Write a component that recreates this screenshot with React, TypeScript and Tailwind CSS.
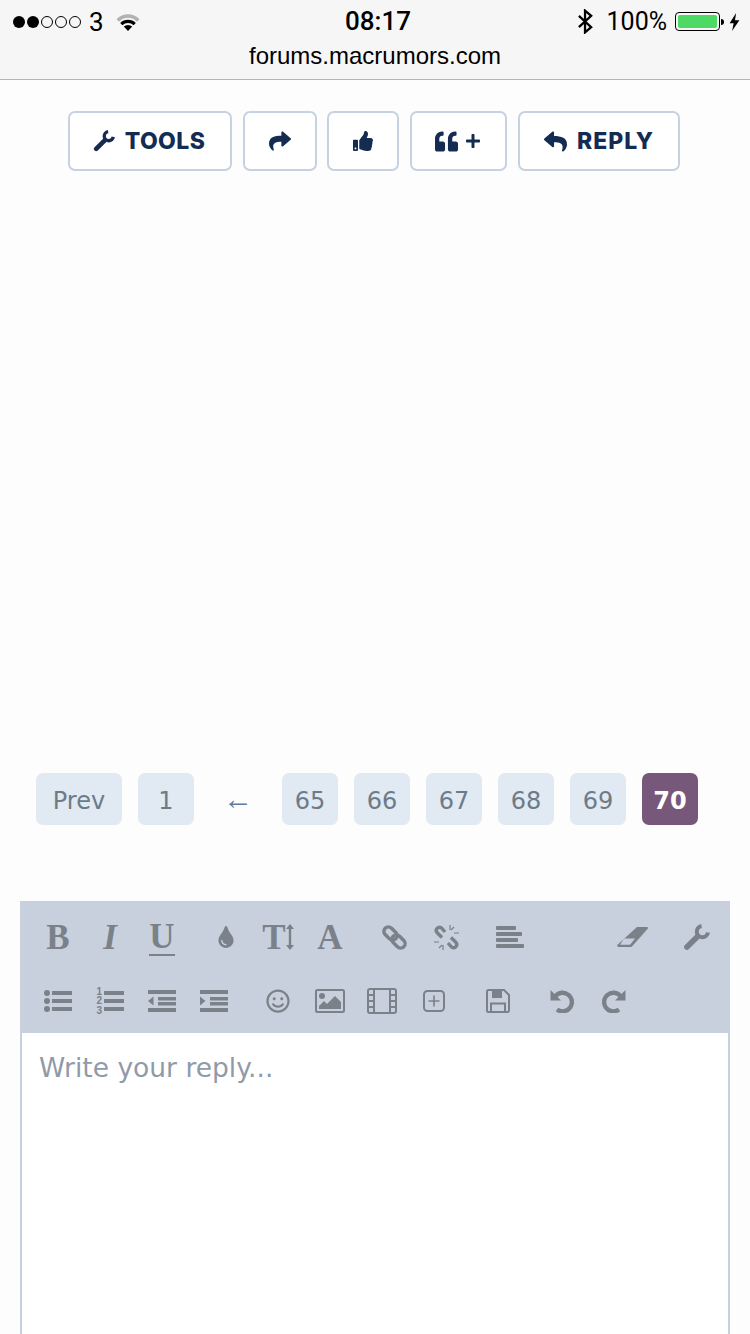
import React from "react";
import { FaShare, FaThumbsUp, FaQuoteLeft, FaPlus, FaReply, FaTint, FaRegSmile } from "react-icons/fa";

const GRAY = "#7b8189";

const StatusBar = () => (
  <div className="h-20 bg-[#f6f6f6] border-b border-[#b4b4b4] font-['Roboto',sans-serif] text-black">
    <div className="relative flex h-[43px] items-center justify-between pl-[13px] pr-[10px]">
      <div className="flex items-center">
        <div className="flex gap-[2px]">
          <span className="h-[12px] w-[12px] rounded-full bg-black" />
          <span className="h-[12px] w-[12px] rounded-full bg-black" />
          <span className="h-[12px] w-[12px] rounded-full border border-black" />
          <span className="h-[12px] w-[12px] rounded-full border border-black" />
          <span className="h-[12px] w-[12px] rounded-full border border-black" />
        </div>
        <span className="ml-[8px] text-[26px] leading-none">3</span>
        <svg className="ml-[12px]" width="24" height="18" viewBox="0 0 24 18">
          <path d="M0.5 6.2a16 16 0 0 1 23 0l-2.400 2.500a12.600 12.600 0 0 0-18.200 0z" fill="#b2b2b2" />
          <path d="M4.200 10a11 11 0 0 1 15.600 0l-2.200 2.300a8 8 0 0 0-11.200 0z" fill="#000" />
          <path d="M7.800 13.600a6 6 0 0 1 8.400 0L12 18z" fill="#000" />
        </svg>
      </div>
      <span className="absolute left-[345px] top-[6px] text-[26px] font-medium leading-[30px]">08:17</span>
      <div className="flex items-center">
        <svg width="17" height="25" viewBox="0 0 18 26" fill="none" stroke="#000" strokeWidth="2.400">
          <path d="M2 7l13 12-6.500 5.500V1.500L15 7 2 19" />
        </svg>
        <span className="ml-[13px] text-[25px] leading-none">100%</span>
        <div className="ml-[8px] flex h-[19px] w-[45px] rounded-[4px] border border-black p-[2px]">
          <div className="h-full w-full rounded-[2px] bg-[#4cd964]" />
        </div>
        <div className="ml-[1px] h-[6px] w-[3px] rounded-r-full bg-black" />
        <svg className="ml-[5px]" width="11" height="18" viewBox="0 0 12 22">
          <path d="M8 0L0 12.500h5L3 22l9-13H6.600z" fill="#000" />
        </svg>
      </div>
    </div>
    <div className="text-center font-['Liberation_Sans',sans-serif] text-[24px] leading-[26px]">forums.macrumors.com</div>
  </div>
);

const ActionButton = ({ className, children }: { className: string; children: React.ReactNode }) => (
  <button
    className={`flex h-[60px] items-center justify-center rounded-[7px] border-2 border-[#c7d2e0] bg-white font-['Inter',sans-serif] text-[23px] font-extrabold text-[#152c52] ${className}`}
  >
    {children}
  </button>
);

const PageBtn = ({ label, className = "w-14", active }: { label: string; className?: string; active?: boolean }) => (
  <div
    className={`flex h-[52px] items-center justify-center rounded-[7px] pt-[3px] text-[24px] ${className} ${
      active ? "bg-[#77587a] font-bold text-white" : "bg-[#e1e9f2] text-[#6d7b88]"
    }`}
  >
    {label}
  </div>
);

const ToolIcon = ({ children }: { children: React.ReactNode }) => (
  <div className="flex h-16 w-[52px] items-center justify-center text-[#7b8189]">{children}</div>
);

const Letter = ({ className = "", children }: { className?: string; children: React.ReactNode }) => (
  <span className={`font-['Liberation_Serif',serif] text-[35px] font-bold leading-none ${className}`}>{children}</span>
);

const Wrench = ({ size, color }: { size: number; color: string }) => (
  <svg width={size} height={size} viewBox="0 0 24 24" fill="none" stroke={color}>
    <path d="M16.500 1.800a5 5 0 1 0 5.700 5.700" strokeWidth="3.600" />
    <path d="M12.500 11.500L3.500 20.500" strokeWidth="5" strokeLinecap="round" />
  </svg>
);

const ListUl = () => (
  <svg width="28" height="22" viewBox="0 0 28 22" fill={GRAY}>
    <circle cx="3" cy="3" r="3" />
    <circle cx="3" cy="11" r="3" />
    <circle cx="3" cy="19" r="3" />
    <rect x="8" y="1" width="20" height="4" />
    <rect x="8" y="9" width="20" height="4" />
    <rect x="8" y="17" width="20" height="4" />
  </svg>
);

const ListOl = () => (
  <svg width="28" height="28" viewBox="0 0 28 28" fill={GRAY}>
    <rect x="8" y="4" width="20" height="4" />
    <rect x="8" y="12" width="20" height="4" />
    <rect x="8" y="20" width="20" height="4" />
    <text x="0.500" y="7.500" fontSize="10" fontWeight="700" fontFamily="Liberation Sans, sans-serif">1</text>
    <text x="0.500" y="17" fontSize="10" fontWeight="700" fontFamily="Liberation Sans, sans-serif">2</text>
    <text x="0.500" y="27" fontSize="10" fontWeight="700" fontFamily="Liberation Sans, sans-serif">3</text>
  </svg>
);

const Outdent = () => (
  <svg width="28" height="22" viewBox="0 0 28 22" fill={GRAY}>
    <rect width="28" height="4" />
    <rect x="10" y="7" width="18" height="3.500" />
    <rect x="10" y="12" width="18" height="3.500" />
    <rect y="18" width="28" height="4" />
    <path d="M0 11l5.500-4.500v9z" />
  </svg>
);

const Indent = () => (
  <svg width="28" height="22" viewBox="0 0 28 22" fill={GRAY}>
    <rect width="28" height="4" />
    <rect x="10" y="7" width="18" height="3.500" />
    <rect x="10" y="12" width="18" height="3.500" />
    <rect y="18" width="28" height="4" />
    <path d="M5.500 11L0 6.500v9z" />
  </svg>
);

const Film = () => (
  <svg width="30" height="26" viewBox="0 0 30 26" fill="none" stroke={GRAY} strokeWidth="2">
    <rect x="1" y="1" width="28" height="24" rx="2" />
    <path d="M7 1v24M23 1v24M1 7h6M1 13h6M1 19h6M23 7h6M23 13h6M23 19h6" />
  </svg>
);

const AlignLeft = () => (
  <svg width="28" height="22" viewBox="0 0 28 22" fill={GRAY}>
    <rect x="0" y="0" width="20" height="4" rx="1" />
    <rect x="0" y="6" width="26" height="4" rx="1" />
    <rect x="0" y="12" width="22" height="4" rx="1" />
    <rect x="0" y="18" width="28" height="4" rx="1" />
  </svg>
);

const TextHeight = () => (
  <div className="flex items-center">
    <Letter>T</Letter>
    <svg width="8" height="26" viewBox="0 0 8 26" fill={GRAY}>
      <path d="M4 0l4 5H5.200v16H8l-4 5-4-5h2.800V5H0z" />
    </svg>
  </div>
);

const LinkIcon = () => (
  <svg width="27" height="27" viewBox="0 0 27 27" fill="none" stroke={GRAY} strokeWidth="3.400">
    <rect x="2" y="5" width="15" height="9" rx="4.500" transform="rotate(45 9.500 9.500)" />
    <rect x="10" y="13" width="15" height="9" rx="4.500" transform="rotate(45 17.500 17.500)" />
  </svg>
);

const UnlinkIcon = () => (
  <svg width="27" height="27" viewBox="0 0 27 27" fill="none" stroke={GRAY}>
    <path d="M12 8L8.500 4a3.200 3.200 0 0 0-4.500 4.500l5 5" strokeWidth="3.400" />
    <path d="M15 19l3.500 4a3.200 3.200 0 0 0 4.500-4.500l-5-5" strokeWidth="3.400" />
    <path d="M17 1v5M21 3l-3 3M26 9h-5M1 18h5M6 24l3-3M10 26v-5" strokeWidth="1.200" />
  </svg>
);

const Eraser = () => (
  <svg width="31" height="20" viewBox="0 0 31 20">
    <path d="M20 0h10a1 1 0 0 1 .7 1.700L15 19.500a1.500 1.500 0 0 1-1 .5H2a1.500 1.500 0 0 1-1.500-2.300z" fill={GRAY} />
    <path d="M7 11.500h11l-5 6.300H3z" fill="#c7d0dc" />
  </svg>
);

const ImageIcon = () => (
  <svg width="30" height="24" viewBox="0 0 30 24" fill="none" stroke={GRAY} strokeWidth="2">
    <rect x="1" y="1" width="28" height="22" rx="1.500" />
    <circle cx="7" cy="7" r="3" fill={GRAY} stroke="none" />
    <path d="M4 20v-3l5-5 3 3 8-8 6 6v7z" fill={GRAY} stroke="none" />
  </svg>
);

const PlusBox = () => (
  <svg width="22" height="22" viewBox="0 0 22 22" fill="none" stroke={GRAY} strokeWidth="2">
    <rect x="1" y="1" width="20" height="20" rx="3.500" />
    <path d="M11 5.500v11M5.500 11h11" strokeWidth="1.600" />
  </svg>
);

const SaveIcon = () => (
  <svg width="24" height="24" viewBox="0 0 24 24" fill="none" stroke={GRAY} strokeWidth="2">
    <path d="M2.500 1H18l5 5v15.500a1.500 1.500 0 0 1-1.500 1.500h-19A1.500 1.500 0 0 1 1 21.500v-19A1.500 1.500 0 0 1 2.500 1z" />
    <path d="M6 1h10v8H6z" fill={GRAY} stroke="none" />
    <path d="M5 23v-8.500h14V23" />
  </svg>
);

const UndoIcon = ({ flip }: { flip?: boolean }) => (
  <svg width="24" height="24" viewBox="0 0 24 24" fill="none" className={flip ? "-scale-x-100" : ""}>
    <path d="M5.500 7a9.300 9.300 0 1 1 1.500 13.500" stroke={GRAY} strokeWidth="4.400" />
    <path d="M0.500 1v10.500H11z" fill={GRAY} />
  </svg>
);

export default function App() {
  return (
    <div className="h-[1334px] w-[750px] overflow-hidden bg-[#fdfdfd] font-['DejaVu_Sans',sans-serif]">
      <StatusBar />

      <div className="mt-[31px] flex pl-[68px]">
        <ActionButton className="w-[164px] gap-[10px] pr-[2px]">
          <Wrench size={22} color="#152c52" />
          <span className="tracking-[0.4px]">TOOLS</span>
        </ActionButton>
        <ActionButton className="ml-[11px] w-[74px]">
          <FaShare size={22} />
        </ActionButton>
        <ActionButton className="ml-[10px] w-[72px]">
          <FaThumbsUp size={20} />
        </ActionButton>
        <ActionButton className="ml-[11px] w-[97px] gap-[7px] pr-[2px]">
          <FaQuoteLeft size={23} />
          <FaPlus size={16} />
        </ActionButton>
        <ActionButton className="ml-[11px] w-[162px] gap-[10px]">
          <FaReply size={23} />
          <span className="tracking-[1px]">REPLY</span>
        </ActionButton>
      </div>

      <div className="mt-[602px] flex items-center gap-4 pl-9">
        <PageBtn label="Prev" className="w-[86px]" />
        <PageBtn label="1" />
        <div className="flex w-14 items-center justify-center font-['Liberation_Serif',serif] text-[30px] leading-none text-[#5f7ba8]">←</div>
        <PageBtn label="65" />
        <PageBtn label="66" />
        <PageBtn label="67" />
        <PageBtn label="68" />
        <PageBtn label="69" />
        <PageBtn label="70" active />
      </div>

      <div className="ml-5 mt-[76px] w-[710px]">
        <div className="flex h-[132px] flex-col justify-center bg-[#c7d0dc] pl-3 pt-1">
          <div className="flex">
            <div className="flex">
              <ToolIcon><Letter>B</Letter></ToolIcon>
              <ToolIcon><Letter className="italic">I</Letter></ToolIcon>
              <ToolIcon>
                <Letter className="border-b-2 border-[#7b8189] text-[33px] leading-[24px]">U</Letter>
              </ToolIcon>
            </div>
            <div className="ml-3 flex">
              <ToolIcon><FaTint size={22} /></ToolIcon>
              <ToolIcon><TextHeight /></ToolIcon>
              <ToolIcon><Letter>A</Letter></ToolIcon>
            </div>
            <div className="ml-3 flex">
              <ToolIcon><LinkIcon /></ToolIcon>
              <ToolIcon><UnlinkIcon /></ToolIcon>
            </div>
            <div className="ml-3 flex">
              <ToolIcon><AlignLeft /></ToolIcon>
            </div>
            <div className="ml-[70px] flex gap-3">
              <ToolIcon><Eraser /></ToolIcon>
              <ToolIcon><Wrench size={27} color={GRAY} /></ToolIcon>
            </div>
          </div>
          <div className="flex">
            <div className="flex">
              <ToolIcon><ListUl /></ToolIcon>
              <ToolIcon><ListOl /></ToolIcon>
              <ToolIcon><Outdent /></ToolIcon>
              <ToolIcon><Indent /></ToolIcon>
            </div>
            <div className="ml-3 flex">
              <ToolIcon><FaRegSmile size={24} /></ToolIcon>
              <ToolIcon><ImageIcon /></ToolIcon>
              <ToolIcon><Film /></ToolIcon>
              <ToolIcon><PlusBox /></ToolIcon>
            </div>
            <div className="ml-3 flex">
              <ToolIcon><SaveIcon /></ToolIcon>
            </div>
            <div className="ml-3 flex">
              <ToolIcon><UndoIcon /></ToolIcon>
              <ToolIcon><UndoIcon flip /></ToolIcon>
            </div>
          </div>
        </div>
        <div className="h-[400px] border-x-2 border-[#c7d0dc] bg-white pl-[17px] pt-[18px] text-[26.500px] leading-[34px] text-[#8f9ba8]">
          Write your reply...
        </div>
      </div>
    </div>
  );
}
